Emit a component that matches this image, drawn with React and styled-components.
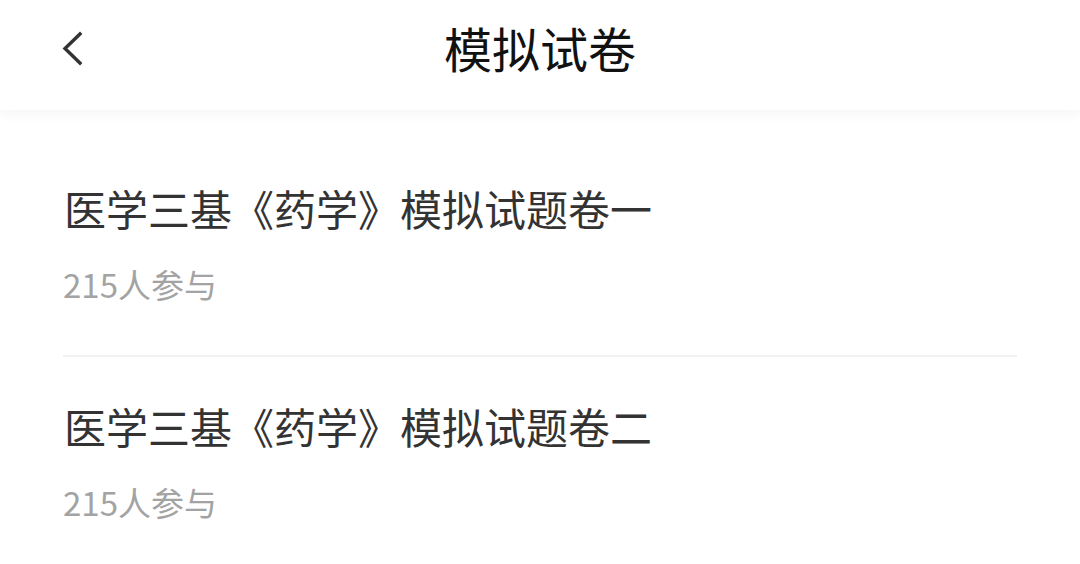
import styled, { createGlobalStyle } from "styled-components";

const GlobalStyle = createGlobalStyle`
  * { box-sizing: border-box; }
  body {
    margin: 0;
    background: #fff;
    font-family: "Noto Sans CJK SC", "Noto Sans", sans-serif;
  }
`;

const Page = styled.div`
  width: 1080px;
  min-height: 564px;
  background: #fff;
  overflow: hidden;
`;

const Header = styled.header`
  position: relative;
  height: 110px;
  display: flex;
  align-items: center;
  justify-content: center;
  background: #fff;
  box-shadow: 0 4px 12px rgba(0, 0, 0, 0.045);
  z-index: 1;
`;

const BackButton = styled.button`
  position: absolute;
  left: 58px;
  top: 29px;
  width: 30px;
  height: 40px;
  padding: 0;
  border: none;
  background: none;
  cursor: pointer;
`;

const Title = styled.h1`
  margin: 0;
  font-size: 48px;
  font-weight: 400;
  color: #111;
  line-height: 1;
  margin-top: -16px;
`;

const List = styled.ul`
  list-style: none;
  margin: 0;
  padding: 0 63px;
`;

const Item = styled.li`
  padding-top: ${(p) => (p.$first ? "74px" : "45px")};
  padding-bottom: 52px;
  border-bottom: ${(p) => (p.$last ? "none" : "2px solid #f2f2f2")};
`;

const ItemTitle = styled.div`
  font-size: 42px;
  line-height: 48px;
  color: #333;
  padding-left: 1px;
`;

const ItemMeta = styled.div`
  margin-top: 33px;
  font-size: 33px;
  line-height: 38px;
  color: #a3a3a3;
`;

const papers = [
  { title: "医学三基《药学》模拟试题卷一", count: 215 },
  { title: "医学三基《药学》模拟试题卷二", count: 215 },
];

const App = () => {
  return (
    <Page>
      <GlobalStyle />
      <Header>
        <BackButton aria-label="返回">
          <svg width="30" height="40" viewBox="0 0 30 40">
            <path
              d="M22 5 L7 19.5 L22 34"
              fill="none"
              stroke="#333"
              strokeWidth="3.4"
              strokeLinecap="square"
              strokeLinejoin="miter"
            />
          </svg>
        </BackButton>
        <Title>模拟试卷</Title>
      </Header>
      <List>
        {papers.map((p, i) => (
          <Item key={i} $first={i === 0} $last={i === papers.length - 1}>
            <ItemTitle>{p.title}</ItemTitle>
            <ItemMeta>{p.count}人参与</ItemMeta>
          </Item>
        ))}
      </List>
    </Page>
  );
};

export default App;
